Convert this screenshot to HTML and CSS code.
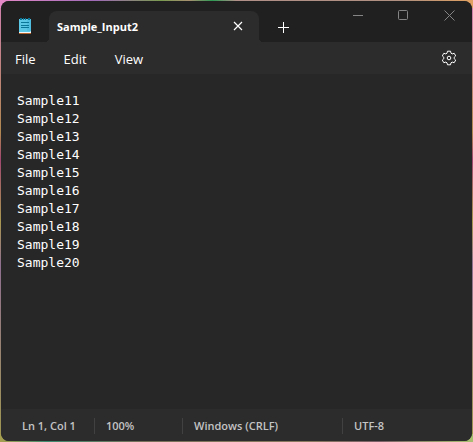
FILE: index.html
```html
<!DOCTYPE html>
<html lang="en">
<head>
<meta charset="utf-8">
<meta name="viewport" content="width=device-width, initial-scale=1">
<title>Sample_Input2</title>
<link rel="stylesheet" href="styles.css">
</head>
<body>
<main class="window">
  <header class="titlebar">
    <svg class="app-icon" width="12" height="16" viewBox="0 0 12 16" aria-hidden="true">
      <path fill="#b5622a" d="M0 13h12v3H0z"/>
      <path fill="#f4f4f4" d="M0 12h12v3H0z"/>
      <path fill="#5cc8e6" d="M0 1h12v12l-1 1H0z"/>
      <path fill="#43b4d8" d="M8 1h4v12H8z" opacity=".5"/>
      <path fill="#0b7798" d="M1 0h2v2H1zM4 0h1v2H4zM6 0h1v2H6zM9 0h2v2H9zM2 4h8v1H2zM2 7h8v1H2zM2 9h8v1H2z"/>
    </svg>
    <div class="tab">
      <span class="tab-title">Sample_Input2</span>
      <button class="icon-button tab-close" aria-label="Close tab">
        <svg width="10" height="10" viewBox="0 0 10 10"><path d="M1 1l8 8M9 1L1 9" stroke-width="1.200"/></svg>
      </button>
    </div>
    <button class="icon-button new-tab" aria-label="New tab">
      <svg width="11" height="11" viewBox="0 0 11 11"><path d="M5.5 0v11M0 5.5h11"/></svg>
    </button>
    <div class="window-controls">
      <button class="icon-button" aria-label="Minimize">
        <svg width="11" height="11" viewBox="0 0 11 11"><path d="M0 5.5h10"/></svg>
      </button>
      <button class="icon-button" aria-label="Maximize">
        <svg width="11" height="11" viewBox="0 0 11 11"><rect x=".5" y=".5" width="9" height="9" rx="1"/></svg>
      </button>
      <button class="icon-button" aria-label="Close">
        <svg width="11" height="11" viewBox="0 0 11 11"><path d="M.5 .5l10 10M10.500 .5l-10 10"/></svg>
      </button>
    </div>
  </header>
  <nav class="menubar">
    <button class="menu">File</button>
    <button class="menu">Edit</button>
    <button class="menu">View</button>
    <button class="icon-button settings" aria-label="Settings">
      <svg width="16" height="16" viewBox="0 0 16 16"><path stroke-linejoin="round" d="M6.500 1.200h3l.5 2 1.200.7 2-.6 1.500 2.600-1.500 1.400v1.400l1.500 1.400-1.500 2.600-2-.6-1.200.7-.5 2h-3l-.5-2-1.200-.7-2 .6-1.500-2.600 1.500-1.400V7.300L1.300 5.900l1.500-2.600 2 .6L6 3.200z"/><circle cx="8" cy="8" r="1.800"/></svg>
    </button>
  </nav>
  <textarea class="editor" aria-label="Text editor" spellcheck="false">Sample11
Sample12
Sample13
Sample14
Sample15
Sample16
Sample17
Sample18
Sample19
Sample20</textarea>
  <footer class="statusbar">
    <span class="status position">Ln 1, Col 1</span>
    <span class="status zoom">100%</span>
    <span class="status line-ending">Windows (CRLF)</span>
    <span class="status encoding">UTF-8</span>
  </footer>
</main>
</body>
</html>
```
FILE: styles.css
```css
* {
  box-sizing: border-box;
}

body {
  margin: 0;
  height: 100vh;
  padding: 1px;
  background:
    linear-gradient(90deg, #e58ac8, #a06ab8 20%, #7a9a50 34%, #a89070 40%, #2f9a55 45%, #b09088 50%, #b09080 85%, #e0a060) top / 100% 8px no-repeat,
    linear-gradient(90deg, #a8a050, #3f8a70 10%, #77705a 30%, #8a7a60 65%, #7a6068 80%, #a8c070) bottom / 100% 8px no-repeat,
    linear-gradient(#d080b0, #b08850 30%, #a04870 36%, #a89850 50%, #907090 60%, #a09850);
  font-family: "Open Sans", "Noto Sans", sans-serif;
  color: #fff;
}

.window {
  display: flex;
  flex-direction: column;
  height: 100%;
  border-radius: 8px;
  overflow: hidden;
  background: #272727;
}

button {
  border: 0;
  padding: 0;
  background: none;
  color: inherit;
  font: inherit;
}

svg {
  display: block;
  fill: none;
  stroke: currentColor;
}

.icon-button {
  display: grid;
  place-items: center;
}

.titlebar {
  display: flex;
  height: 41px;
  background: #202020;
}

.app-icon {
  margin: 17px 18px 0;
  stroke: none;
}

.tab {
  position: relative;
  display: flex;
  align-items: center;
  justify-content: space-between;
  flex: 0 1 210px;
  margin-top: 10px;
  padding: 0 11px 0 8px;
  border-radius: 8px 8px 0 0;
  background: #2c2c2c;
}

.tab::before,
.tab::after {
  content: "";
  position: absolute;
  bottom: 0;
  width: 4px;
  height: 4px;
}

.tab::before {
  right: 100%;
  background: radial-gradient(circle at 0 0, transparent 4px, #2c2c2c 4px);
}

.tab::after {
  left: 100%;
  background: radial-gradient(circle at 100% 0, transparent 4px, #2c2c2c 4px);
}

.tab-title {
  font-size: 11px;
  font-weight: 700;
  line-height: 16px;
}

.tab-close {
  width: 20px;
  height: 20px;
  margin-bottom: 2px;
}

.new-tab {
  width: 32px;
  height: 32px;
  margin: 10px 0 0 8px;
}

.window-controls {
  display: flex;
  margin-left: auto;
  color: #858585;
}

.window-controls .icon-button {
  width: 46px;
  height: 28px;
}

.window-controls .icon-button:nth-child(2) {
  width: 45px;
}

.menubar {
  display: flex;
  align-items: center;
  gap: 28px;
  height: 32px;
  padding: 0 15px 0 14px;
  background: #2c2c2c;
}

.menu {
  padding-top: 2px;
  font-size: 13px;
  line-height: 20px;
}

.settings {
  width: 16px;
  height: 32px;
  margin-left: auto;
}

.editor {
  flex: 1;
  width: 100%;
  min-height: 0;
  border: 0;
  padding: 18px 16px;
  outline: 0;
  resize: none;
  background: #272727;
  color: #fff;
  font: 13px/18px "DejaVu Sans Mono", monospace;
}

.statusbar {
  display: flex;
  align-items: center;
  height: 32px;
  padding: 2px 0 0 10px;
  background: #2c2c2c;
  color: #c4c4c4;
  font-size: 11px;
  font-weight: 600;
  line-height: 16px;
}

.status {
  padding-left: 11px;
  white-space: nowrap;
}

.status + .status {
  border-left: 1px solid #414141;
}

.position {
  flex: 0 0 83px;
}

.zoom {
  flex: 0 0 88px;
}

.line-ending {
  flex: 0 0 160px;
}
```
